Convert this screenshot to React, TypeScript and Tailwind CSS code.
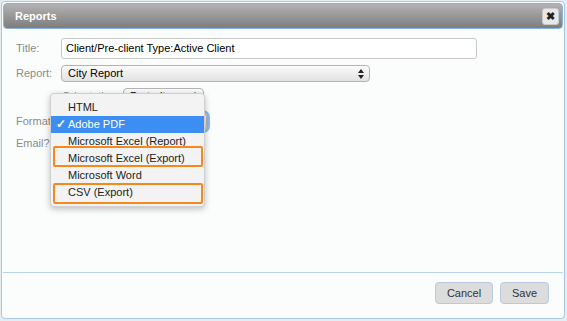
import React from "react";

function SelectBox({ label, className }: { label: string; className: string }) {
  return (
    <div
      className={`flex items-center justify-between rounded-[4px] border border-[#b4b4b4] bg-gradient-to-b from-[#fbfbfb] to-[#e2e2e2] pl-[6px] pr-[5px] text-[11px] text-black ${className}`}
    >
      <span className="whitespace-nowrap leading-none">{label}</span>
      <svg width="6" height="10" viewBox="0 0 6 10">
        <path d="M3 0 L6 4 L0 4 Z" fill="#222" />
        <path d="M3 10 L6 6 L0 6 Z" fill="#222" />
      </svg>
    </div>
  );
}

export default function App() {
  const items = [
    "HTML",
    "Adobe PDF",
    "Microsoft Excel (Report)",
    "Microsoft Excel (Export)",
    "Microsoft Word",
    "CSV (Export)",
  ];
  return (
    <div
      className="relative h-[321px] w-[567px] overflow-hidden bg-[#e6edf2] pl-[1px] pt-[1px]"
      style={{ fontFamily: '"Liberation Sans", Arial, sans-serif' }}
    >
      <div className="flex h-[318px] w-[564px] flex-col rounded-[4px] border border-[#a9c8e0] bg-[#fbfdfd] p-[1px]">
        {/* Title bar */}
        <div className="flex h-[26px] items-center justify-between rounded-[4px] border border-[#8ab4d9] bg-gradient-to-b from-[#b3b3b3] to-[#7d7d7d] pl-[11px] pr-[3px]">
          <span className="text-[11px] font-bold text-white">Reports</span>
          <div className="flex h-[17px] w-[17px] items-center justify-center rounded-[3px] border border-[#c9c9c9] bg-[#e8e8e8] text-[11px] font-bold leading-none text-[#222]">
            ✖
          </div>
        </div>

        {/* Content */}
        <div className="flex flex-1 flex-col pl-[13px] pt-[9px]">
          <div className="flex items-center">
            <span className="w-[45px] text-[11px] text-[#8a8a8a]">Title:</span>
            <div className="flex h-[21px] w-[416px] items-center rounded-[3px] border border-[#c8c8c8] bg-white pl-[4px] text-[11px] text-black">
              Client/Pre-client Type:Active Client
            </div>
          </div>
          <div className="mt-[6px] flex items-center">
            <span className="w-[45px] text-[11px] text-[#8a8a8a]">Report:</span>
            <SelectBox label="City Report" className="h-[17px] w-[309px]" />
          </div>
          <div className="mt-[6px] flex items-center">
            <span className="ml-[46px] w-[61px] whitespace-nowrap text-[11px] text-[#8a8a8a]">Orientation:</span>
            <SelectBox label="Portrait" className="h-[17px] w-[81px]" />
          </div>
          <div className="mt-[8px] flex items-center">
            <span className="w-[45px] text-[11px] text-[#8a8a8a]">Format:</span>
            <SelectBox
              label=""
              className="h-[17px] w-[146px] shadow-[0_0_0_3px_#8fb8ec]"
            />
          </div>
          <div className="mt-[5px] flex h-[17px] items-center">
            <span className="w-[45px] text-[11px] text-[#8a8a8a]">Email?</span>
          </div>
        </div>

        {/* Footer */}
        <div className="flex h-[45px] items-start justify-end gap-[7px] border-t border-[#b9d3e8] pr-[14px] pt-[9px]">
          <button className="h-[22px] w-[58px] rounded-[4px] border border-[#b7cbdc] bg-[#dcdcdc] text-[11px] text-[#333]">
            Cancel
          </button>
          <button className="h-[22px] w-[49px] rounded-[4px] border border-[#b7cbdc] bg-[#dcdcdc] text-[11px] text-[#333]">
            Save
          </button>
        </div>
      </div>

      {/* Dropdown menu */}
      <div className="absolute left-[50px] top-[93px] w-[155px] rounded-[4px] border border-[#cfcfcf] bg-[#f3f3f3] py-[5px] shadow-[0_2px_6px_rgba(0,0,0,0.25)]">
        {items.map((it, i) => (
          <div
            key={it}
            className={`relative flex h-[17px] items-center whitespace-nowrap pl-[17px] text-[11px] ${
              i === 1 ? "bg-[#3d8ef2] text-white" : "text-[#222]"
            }`}
          >
            {i === 1 && (
              <span className="absolute left-[5px] top-[0px] text-[12px] font-bold leading-[17px]">✓</span>
            )}
            {it}
          </div>
        ))}
        <div className="absolute left-[2px] top-[52px] h-[21px] w-[150px] rounded-[2px] border-[2px] border-[#f5891e]" />
        <div className="absolute left-[2px] top-[89px] h-[21px] w-[150px] rounded-[2px] border-[2px] border-[#f5891e]" />
      </div>
    </div>
  );
}
